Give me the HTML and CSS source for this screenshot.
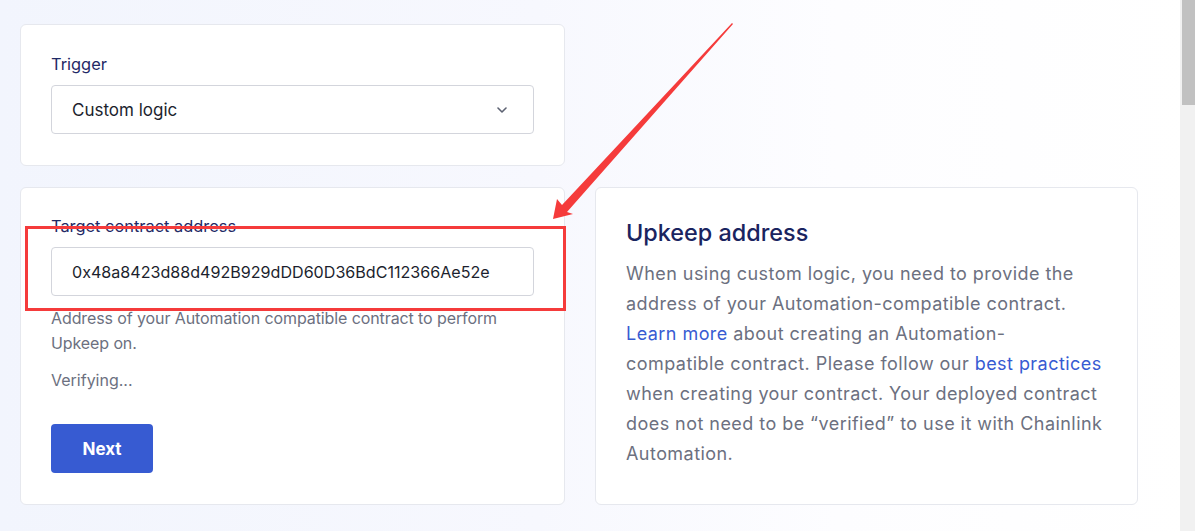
FILE: index.html
```html
<!DOCTYPE html>
<html lang="en">
<head>
<meta charset="utf-8">
<title>Register Upkeep</title>
<link rel="stylesheet" href="styles.css">
</head>
<body>
<main class="grid">
  <section class="card card-trigger">
    <label class="label">Trigger</label>
    <div class="select">
      <span>Custom logic</span>
      <svg class="chev" width="10" height="6" viewBox="0 0 10 6"><path d="M1 1l4 4 4-4" fill="none" stroke="#5d6272" stroke-width="1.6" stroke-linecap="round" stroke-linejoin="round"/></svg>
    </div>
  </section>

  <section class="card card-target">
    <label class="label">Target contract address</label>
    <div class="input">0x48a8423d88d492B929dDD60D36BdC112366Ae52e</div>
    <p class="help">Address of your Automation compatible contract to perform Upkeep on.</p>
    <p class="status">Verifying...</p>
    <button class="btn">Next</button>
  </section>

  <aside class="card card-info">
    <h2 class="info-title">Upkeep address</h2>
    <p class="info-text">When using custom logic, you need to provide the<br>address of your Automation-compatible contract.<br><a href="#">Learn more</a> about creating an Automation-<br>compatible contract. Please follow our <a href="#">best practices</a><br>when creating your contract. Your deployed contract<br>does not need to be “verified” to use it with Chainlink<br>Automation.</p>
  </aside>
</main>

<svg class="annot" width="1180" height="531" viewBox="0 0 1180 531">
  <rect x="26.5" y="227.5" width="538" height="82" fill="none" stroke="#f53b3b" stroke-width="3"/>
  <polygon points="732,23 733,24 567,212 573,214 553,219 557,199 562,205" fill="#f53b3b"/>
</svg>

<div class="scrollbar"><div class="thumb"></div></div>
</body>
</html>
```
FILE: styles.css
```css
* { box-sizing: border-box; }
html, body { margin: 0; padding: 0; }
body {
  width: 1195px;
  height: 531px;
  overflow: hidden;
  font-family: Inter, "Noto Sans", sans-serif;
  background: linear-gradient(90deg, #f2f5fd 0%, #f7f8fe 45%, #fdfdff 70%, #ffffff 100%);
  position: relative;
}
.grid {
  position: relative;
  display: grid;
  grid-template-columns: 545px 543px;
  column-gap: 30px;
  row-gap: 21px;
  padding: 24px 0 0 20px;
  width: 1180px;
}
.card {
  background: #fff;
  border: 1px solid #e6e8ee;
  border-radius: 6px;
}
.card-trigger {
  grid-column: 1;
  grid-row: 1;
  padding: 27px 30px 30px;
  height: 142px;
}
.card-target {
  grid-column: 1;
  grid-row: 2;
  padding: 26px 30px 30px;
  height: 318px;
}
.card-info {
  grid-column: 2;
  grid-row: 2;
  padding: 30px 30px 30px;
  height: 318px;
}
.label {
  display: block;
  font-size: 16.4px;
  line-height: 24px;
  color: #1f2a66;
  margin-bottom: 9px;
}
.select, .input {
  height: 49px;
  border: 1px solid #d3d5dc;
  border-radius: 4px;
  display: flex;
  align-items: center;
  padding: 0 20px;
  font-size: 17px;
  color: #1c1f2e;
}
.select { justify-content: space-between; }
.chev { margin-right: 6px; }
.input { font-size: 16.1px; }
.help {
  margin: 10px 0 0;
  font-size: 16px;
  line-height: 25px;
  letter-spacing: -0.1px;
  color: #6c7080;
}
.status {
  margin: 12px 0 0;
  font-size: 16px;
  line-height: 25px;
  color: #6c7080;
}
.btn {
  margin-top: 31px;
  width: 102px;
  height: 49px;
  border: 0;
  border-radius: 4px;
  background: #375bd2;
  color: #fff;
  font-family: inherit;
  font-size: 17px;
  font-weight: 700;
}
.info-title {
  margin: 0;
  font-size: 23.4px;
  line-height: 30px;
  font-weight: 500;
  color: #1a2460;
}
.info-text {
  margin: 11px 0 0;
  font-size: 18px;
  line-height: 30px;
  letter-spacing: 0.45px;
  color: #6c7080;
}
.info-text a { color: #375bd2; text-decoration: none; }
.annot {
  position: absolute;
  left: 0;
  top: 0;
  pointer-events: none;
}
.scrollbar {
  position: absolute;
  right: 0;
  top: 0;
  width: 15px;
  height: 531px;
  background: #f1f1f1;
}
.thumb {
  margin-left: 2px;
  width: 13px;
  height: 105px;
  background: #c1c1c1;
}
```
